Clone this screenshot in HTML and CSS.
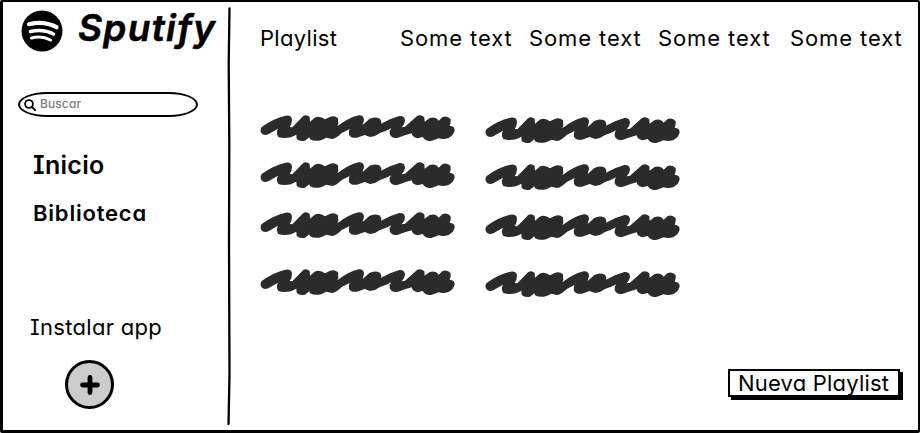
FILE: index.html
```html
<!DOCTYPE html>
<html lang="es">
<head>
<meta charset="utf-8">
<title>Sputify</title>
<link rel="stylesheet" href="styles.css">
</head>
<body>
<svg width="0" height="0" class="defs" aria-hidden="true">
  <symbol id="scribble" viewBox="0 0 630 150">
    <path d="M20 66 Q55 40 92 32 Q110 30 111 44 Q111 56 104 66 L112 67 L144 34 Q154 27 164 36 L165 50 L179 38 Q194 31 210 43 L224 36 Q238 30 249 40 L250 57 L247 64 Q280 38 311 31 Q327 30 327 45 L323 60 L343 42 Q358 33 375 41 Q381 50 378 56 L405 43 L433 33 Q450 32 450 47 Q449 58 440 67 L450 65 L486 33 Q497 27 508 37 L509 50 L524 39 Q541 33 551 47 L563 36 Q578 31 587 43 Q588 55 584 62 Q599 63 599 76 Q597 90 581 99 Q565 104 551 100 L531 107 Q513 111 503 96 L487 100 Q472 97 470 85 Q450 90 429 98 Q410 102 404 87 Q403 75 409 70 Q390 80 375 84 Q363 94 345 96 Q333 92 329 90 L306 98 Q289 101 282 89 Q280 78 284 72 L260 84 Q244 101 231 102 L214 98 L200 105 Q181 111 165 103 L163 97 L150 107 Q134 110 125 102 L124 89 L108 97 Q84 101 70 96 Q62 84 69 71 L40 88 Q24 94 17 80 Q15 72 20 66 Z" fill="#2b2b2b"/>
  </symbol>
</svg>
<div class="window">
  <aside class="sidebar">
    <div class="brand">
      <svg class="logo" viewBox="0 0 42 42">
        <circle cx="21" cy="21" r="20.5"/>
        <path class="arc one" d="M8 14.200 Q23 10.500 35.500 17.200"/>
        <path class="arc two" d="M9.500 21.600 Q22 18.500 32.500 24"/>
        <path class="arc three" d="M10.500 28 Q21 25.500 29.500 30"/>
      </svg>
      <h1>Sputify</h1>
    </div>
    <div class="search">
      <svg class="lens" viewBox="0 0 12 12"><circle cx="5" cy="5" r="3.900"/><path d="M8 8 L11 11"/></svg>
      <span>Buscar</span>
    </div>
    <nav class="menu">
      <a class="inicio">Inicio</a>
      <a class="biblioteca">Biblioteca</a>
    </nav>
    <p class="install">Instalar app</p>
    <div class="add"><svg viewBox="0 0 20 20"><path d="M10 2.500V17.500M2.500 10H17.500"/></svg></div>
  </aside>
  <svg class="divider" viewBox="0 0 6 424"><path d="M3.500 4.500 L2.700 60 L3.300 140 L3 240 L3.500 370 L2.500 420"/></svg>
  <main class="content">
    <header class="tabs">
      <span class="playlist">Playlist</span>
      <span>Some text</span>
      <span>Some text</span>
      <span>Some text</span>
      <span>Some text</span>
    </header>
    <section class="tracks">
      <div class="column">
        <svg><use href="#scribble"/></svg>
        <svg><use href="#scribble"/></svg>
        <svg><use href="#scribble"/></svg>
        <svg><use href="#scribble"/></svg>
      </div>
      <div class="column second">
        <svg><use href="#scribble"/></svg>
        <svg><use href="#scribble"/></svg>
        <svg><use href="#scribble"/></svg>
        <svg><use href="#scribble"/></svg>
      </div>
    </section>
    <div class="new">Nueva Playlist</div>
  </main>
</div>
</body>
</html>
```
FILE: styles.css
```css
* { box-sizing: border-box; }
body {
  margin: 0;
  background: #fff;
  color: #000;
  font-family: Inter, "Open Sans", sans-serif;
  font-feature-settings: "cv11", "cv08";
  white-space: nowrap;
}
.defs { position: absolute; }
.window {
  display: flex;
  width: 920px;
  height: 433px;
  overflow: hidden;
  border: 3px solid #000;
  border-top-width: 2px;
  border-right-width: 2px;
  border-radius: 2px;
}
.sidebar { width: 223px; flex: none; }
.brand { display: flex; height: 60px; padding: 8px 0 0 18px; }
.logo { width: 42px; height: 42px; flex: none; }
.arc { fill: none; stroke: #fff; stroke-linecap: round; }
.one { stroke-width: 4.2; }
.two { stroke-width: 3.6; }
.three { stroke-width: 3; }
h1 {
  margin: -5px 0 0 15px;
  font-size: 37px;
  line-height: 46px;
  font-style: italic;
  font-weight: 600;
  letter-spacing: 1.3px;
  -webkit-text-stroke: 0.6px #000;
}
.search {
  display: flex;
  align-items: center;
  width: 180px;
  height: 25px;
  margin: 30px 0 0 15px;
  padding: 0 0 2px 6px;
  border: 2px solid #000;
  border-radius: 30px / 13px;
  font-size: 12px;
  font-weight: 500;
  letter-spacing: 0.1px;
  color: #7b7d84;
}
.lens { width: 12px; height: 12px; margin: 2px 4px 0 -2px; fill: none; stroke: #000; stroke-width: 1.8; stroke-linecap: round; }
.menu { padding: 32px 0 0 30px; }
.menu a { display: block; font-weight: 600; }
.inicio { font-size: 25px; line-height: 32px; letter-spacing: 0.3px; }
.biblioteca { margin-top: 18px; font-size: 22px; line-height: 28px; letter-spacing: 0.8px; }
.install { margin: 86px 0 0 27px; font-size: 22px; line-height: 28px; letter-spacing: 0.3px; }
.add {
  display: flex;
  align-items: center;
  justify-content: center;
  width: 49px;
  height: 49px;
  margin: 19px 0 0 62px;
  border: 3px solid #000;
  border-radius: 50%;
  background: #ccc;
}
.add svg { width: 20px; height: 20px; margin-top: 1px; stroke: #000; stroke-width: 4.8; stroke-linecap: round; }
.divider { width: 6px; height: 424px; flex: none; margin-top: 2px; fill: none; stroke: #000; stroke-width: 2.3; stroke-linecap: round; }
.content { flex: 1; }
.tabs { display: flex; height: 102px; padding: 22px 0 0 28px; font-size: 22px; line-height: 28px; letter-spacing: 0.9px; }
.tabs span { width: 129px; }
.tabs .playlist { width: 140px; letter-spacing: 0.3px; }
.tabs span:nth-child(4) { width: 132px; }
.tracks { display: flex; gap: 15px; height: 250px; padding-left: 23px; }
.column { display: grid; grid-template-rows: 47px 50px 57px 50px; align-content: start; padding-top: 1px; }
.column svg { display: block; width: 210px; height: 50px; }
.second { padding-top: 3px; }
.new {
  width: 172px;
  height: 28px;
  margin: 15px 0 0 496px;
  padding-left: 8px;
  border: 2px solid #000;
  box-shadow: 3px 3px 0 #000;
  font-size: 22px;
  line-height: 25px;
  letter-spacing: 0.2px;
}
```
